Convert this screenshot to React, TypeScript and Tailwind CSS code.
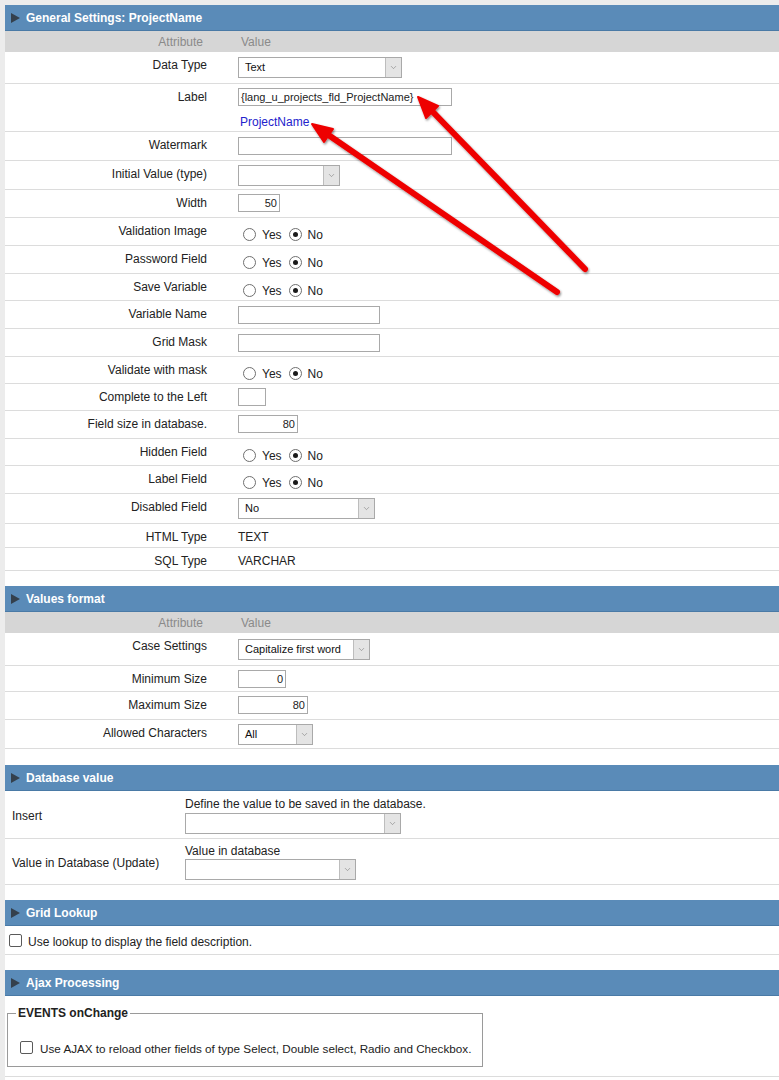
import { ChevronDown } from 'lucide-react'
import type { ReactNode } from 'react'

const font = { fontFamily: '"Liberation Sans", Arial, sans-serif' }

function SectionHeader({ title }: { title: string }) {
    return (
        <div className="flex h-[26px] items-center bg-[#5a8bb8] border-b border-[#4a7aa6]">
            <svg className="ml-[6px]" width="9" height="10" viewBox="0 0 9 10">
                <polygon points="0,0 9,5 0,10" fill="#34404c" />
            </svg>
            <span className="ml-[6px] text-[12px] font-bold text-white">{title}</span>
        </div>
    )
}

function AttrHeader() {
    return (
        <div className="flex h-[21px] items-center bg-[#d6d6d6] text-[12px] text-[#8a8a8a]">
            <div className="w-[198px] text-right">Attribute</div>
            <div className="ml-[38px]">Value</div>
        </div>
    )
}

function Row({ label, h, children, radio }: { label: string; h: string; children?: ReactNode; radio?: boolean }) {
    return (
        <div className={`flex items-start border-b border-[#dcdcdc] ${h}`}>
            <div className="w-[202px] pt-[6px] text-right text-[12px] leading-[14px] text-[#222]">{label}</div>
            <div className={`ml-[31px] ${radio ? 'pt-[7px]' : 'pt-[4px]'}`}>{children}</div>
        </div>
    )
}

function Select({ w, value }: { w: string; value?: string }) {
    return (
        <div className={`flex h-[21px] border border-[#a9a9a9] bg-white ${w}`}>
            <span className="flex-1 pl-[6px] text-[11px] leading-[19px] text-[#111]">{value}</span>
            <span className="flex w-[16px] items-center justify-center border-l border-[#bdbdbd] bg-[#e4e4e4]">
                <ChevronDown size={9} strokeWidth={1.5} color="#777" />
            </span>
        </div>
    )
}

function Input({ w, value, right }: { w: string; value?: string; right?: boolean }) {
    return (
        <div
            className={`h-[18px] border border-[#a9a9a9] bg-white px-[2px] text-[11px] leading-[16px] text-[#222] ${w} ${right ? 'text-right' : ''}`}
        >
            {value}
        </div>
    )
}

function Radio({ checked }: { checked?: boolean }) {
    return (
        <span className="flex h-[13px] w-[13px] items-center justify-center rounded-full border border-[#6f6f6f] bg-white">
            {checked && <span className="h-[5px] w-[5px] rounded-full bg-[#1a1a1a]" />}
        </span>
    )
}

function YesNo() {
    return (
        <div className="flex items-center pl-[5px] text-[12px] text-[#222]">
            <Radio />
            <span className="ml-[6px] pt-[1px]">Yes</span>
            <span className="ml-[7px]"><Radio checked /></span>
            <span className="ml-[6px] pt-[1px]">No</span>
        </div>
    )
}

function Checkbox() {
    return <span className="inline-block h-[13px] w-[13px] shrink-0 rounded-[2px] border border-[#5a5a5a] bg-white" />
}

function Arrows() {
    return (
        <svg className="pointer-events-none absolute left-0 top-0" width="779" height="1080">
            <defs>
                <filter id="sh" x="-10%" y="-10%" width="120%" height="120%">
                    <feDropShadow dx="1" dy="1.5" stdDeviation="1" floodColor="#000" floodOpacity="0.45" />
                </filter>
            </defs>
            <g filter="url(#sh)" fill="#ee0000" stroke="#ee0000">
                <line x1="585" y1="269" x2="431" y2="110" strokeWidth="6" strokeLinecap="round" />
                <polygon points="418,97 438,106 426,118" strokeWidth="2" strokeLinejoin="round" />
                <line x1="557" y1="292" x2="327" y2="134" strokeWidth="6" strokeLinecap="round" />
                <polygon points="312,124 333,129 324,142" strokeWidth="2" strokeLinejoin="round" />
            </g>
        </svg>
    )
}

export default function App() {
    return (
        <div className="relative min-h-screen bg-[#ececec] pl-[5px] pt-[5px]" style={font}>
            <div className="bg-white pb-[4px]">
                <SectionHeader title="General Settings: ProjectName" />
                <AttrHeader />
                <Row label="Data Type" h="h-[32px]">
                    <div className="pt-[1px]"><Select w="w-[164px]" value="Text" /></div>
                </Row>
                <Row label="Label" h="h-[48px]">
                    <Input w="w-[214px]" value="{lang_u_projects_fld_ProjectName}" />
                    <div className="mt-[7px] pl-[2px] text-[12px] text-[#2222cc]">ProjectName</div>
                </Row>
                <Row label="Watermark" h="h-[29px]">
                    <div className="pt-[1px]"><Input w="w-[214px]" /></div>
                </Row>
                <Row label="Initial Value (type)" h="h-[29px]">
                    <Select w="w-[102px]" />
                </Row>
                <Row label="Width" h="h-[28px]">
                    <Input w="w-[42px]" value="50" right />
                </Row>
                <Row label="Validation Image" h="h-[28px]" radio>
                    <YesNo />
                </Row>
                <Row label="Password Field" h="h-[28px]" radio>
                    <YesNo />
                </Row>
                <Row label="Save Variable" h="h-[27px]" radio>
                    <YesNo />
                </Row>
                <Row label="Variable Name" h="h-[28px]">
                    <div className="pt-[1px]"><Input w="w-[142px]" /></div>
                </Row>
                <Row label="Grid Mask" h="h-[28px]">
                    <div className="pt-[1px]"><Input w="w-[142px]" /></div>
                </Row>
                <Row label="Validate with mask" h="h-[27px]" radio>
                    <YesNo />
                </Row>
                <Row label="Complete to the Left" h="h-[27px]">
                    <Input w="w-[28px]" />
                </Row>
                <Row label="Field size in database." h="h-[28px]">
                    <Input w="w-[60px]" value="80" right />
                </Row>
                <Row label="Hidden Field" h="h-[27px]" radio>
                    <YesNo />
                </Row>
                <Row label="Label Field" h="h-[28px]" radio>
                    <YesNo />
                </Row>
                <Row label="Disabled Field" h="h-[30px]">
                    <Select w="w-[137px]" value="No" />
                </Row>
                <Row label="HTML Type" h="h-[24px]">
                    <div className="pt-[2px] text-[12px] leading-[14px] text-[#222]">TEXT</div>
                </Row>
                <Row label="SQL Type" h="h-[23px]">
                    <div className="pt-[2px] text-[12px] leading-[14px] text-[#222]">VARCHAR</div>
                </Row>

                <div className="h-[15px]" />
                <SectionHeader title="Values format" />
                <AttrHeader />
                <Row label="Case Settings" h="h-[33px]">
                    <div className="pt-[2px]"><Select w="w-[132px]" value="Capitalize first word" /></div>
                </Row>
                <Row label="Minimum Size" h="h-[26px]">
                    <Input w="w-[48px]" value="0" right />
                </Row>
                <Row label="Maximum Size" h="h-[28px]">
                    <Input w="w-[70px]" value="80" right />
                </Row>
                <Row label="Allowed Characters" h="h-[29px]">
                    <Select w="w-[75px]" value="All" />
                </Row>

                <div className="h-[16px]" />
                <SectionHeader title="Database value" />
                <div className="flex h-[48px] items-start border-b border-[#dcdcdc]">
                    <div className="w-[180px] self-center pl-[7px] pt-[2px] text-[12px] text-[#222]">Insert</div>
                    <div className="pt-[6px]">
                        <div className="text-[12px] leading-[14px] text-[#222]">Define the value to be saved in the database.</div>
                        <div className="mt-[2px]"><Select w="w-[216px]" /></div>
                    </div>
                </div>
                <div className="flex h-[46px] items-start border-b border-[#dcdcdc]">
                    <div className="w-[180px] self-center pl-[7px] pt-[2px] text-[12px] text-[#222]">Value in Database (Update)</div>
                    <div className="pt-[5px]">
                        <div className="text-[12px] leading-[14px] text-[#222]">Value in database</div>
                        <div className="mt-[1px]"><Select w="w-[171px]" /></div>
                    </div>
                </div>

                <div className="h-[15px]" />
                <SectionHeader title="Grid Lookup" />
                <div className="flex h-[29px] items-center border-b border-[#dcdcdc] pl-[4px] text-[12px] text-[#222]">
                    <Checkbox />
                    <span className="ml-[6px] pt-[3px]">Use lookup to display the field description.</span>
                </div>

                <div className="h-[15px]" />
                <SectionHeader title="Ajax Processing" />
                <div className="border-b border-[#dcdcdc] pb-[9px] pl-[2px] pt-[10px]">
                    <fieldset className="w-[476px] border border-[#9a9a9a] pb-[8px] pl-[12px]">
                        <legend className="-ml-[4px] px-[2px] text-[12px] font-bold leading-[14px] text-[#222]">EVENTS onChange</legend>
                        <div className="flex items-center pt-[18px] text-[12px] text-[#222]">
                            <Checkbox />
                            <span className="ml-[7px] whitespace-nowrap pt-[2px] text-[11.7px]">Use AJAX to reload other fields of type Select, Double select, Radio and Checkbox.</span>
                        </div>
                    </fieldset>
                </div>
            </div>
            <Arrows />
        </div>
    )
}
